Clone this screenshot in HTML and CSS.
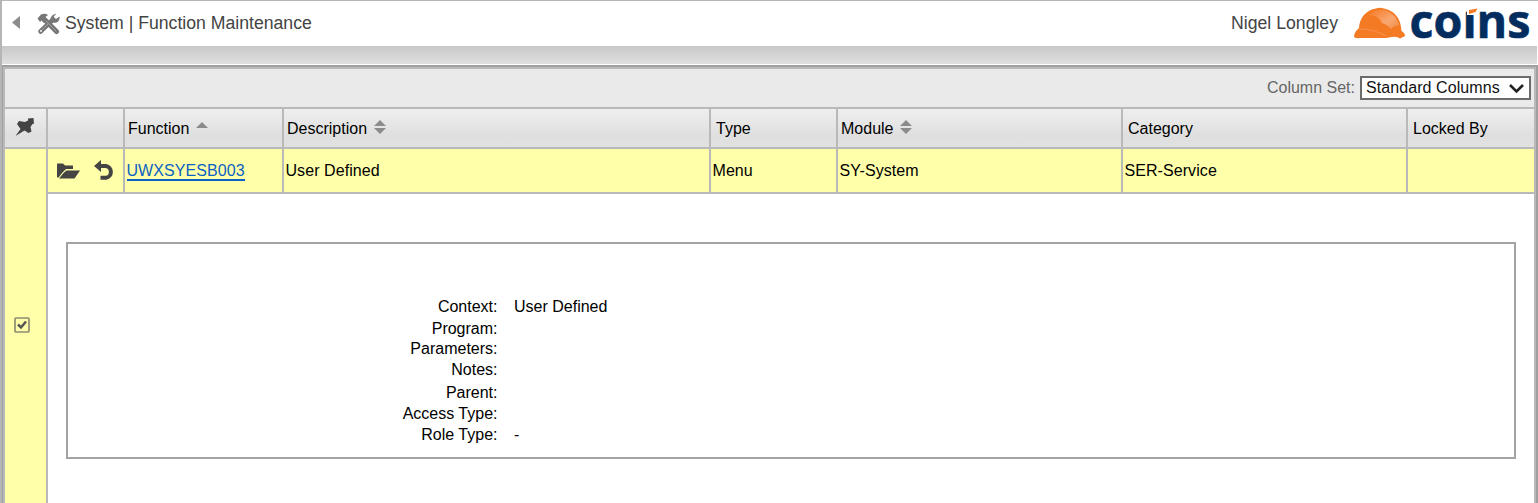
FILE: index.html
```html
<!DOCTYPE html>
<html lang="en">
<head>
<meta charset="utf-8">
<title>System | Function Maintenance</title>
<link rel="stylesheet" href="styles.css">
</head>
<body>
<div class="app">
  <header class="topbar">
    <svg class="back" width="8" height="13" viewBox="0 0 8 13"><path d="M8 0V13L0 6.500Z" fill="#8c8c8c"/></svg>
    <svg class="tools" width="23" height="22" viewBox="0 0 23 22">
      <g fill="none" stroke="#777" stroke-linecap="round">
        <path d="M8 7 19.500 18.500" stroke-width="5"/>
        <path d="M3.500 18.500 16 6.500" stroke-width="4.600"/>
      </g>
      <path d="M.5 5.500 4 1.500Q8 0 11 2L8.500 4 10.500 7 7 10 4.500 7.500 3 9Z" fill="#777"/>
      <path d="M19.500.5 16.500 4 19 6 22.500 3.500Q23.200 8 19.500 9.500 15 10.500 13.500 7.500 13 2 19.500.5Z" fill="#777"/>
      <path d="M9 8 19 18M4 18l8-8" stroke="#a0a0a0" stroke-width="1" fill="none"/>
      <circle cx="4" cy="18" r=".9" fill="#fff"/>
    </svg>
    <h1 class="title">System | Function Maintenance</h1>
    <span class="user">Nigel Longley</span>
    <svg class="logo" width="184" height="44" viewBox="1354 1 184 44" role="img" aria-label="coins">
      <defs>
        <linearGradient id="shine" x1="0" y1="0" x2="1" y2="1"><stop offset="0" stop-color="#f57a24"/><stop offset=".6" stop-color="#f9a873"/><stop offset="1" stop-color="#f58a42"/></linearGradient>
      </defs>
      <path d="M1354 36C1354 32 1356.500 29 1359 27C1359.500 17 1366 9 1376 7.500Q1379 6 1384 7.500C1394 9.500 1400 17 1401 26L1401.500 30Q1405 32 1405 35L1400 37.500Q1397 35 1392 36L1386 37H1360Q1355 37.500 1354 36Z" fill="#f57a24"/>
      <path d="M1369 14Q1375 8 1385 9Q1396 13 1399 24Q1393 25 1391 28Q1386 23 1382 22Q1378 14 1369 14Z" fill="url(#shine)"/>
      <path d="M1359.500 28Q1374 28 1386 35" stroke="#f89350" fill="none"/>
      <text class="logo-text" x="1409.500" y="36.500" textLength="121" lengthAdjust="spacingAndGlyphs">coıns</text>
      <path d="M1467 9H1479V14H1467Z" fill="#fff"/>
      <path d="M1469 9 1477.500 7.500 1475.500 11 1469 13Z" fill="#f57a24"/>
    </svg>
  </header>
  <div class="band"></div>
  <main class="panel">
    <div class="toolbar">
      <label for="column-set">Column Set:</label>
      <span class="select-wrap">
        <select id="column-set"><option>Standard Columns</option></select>
        <svg class="chevron" width="15" height="10" viewBox="0 0 15 10"><path d="M1 1 7.500 7.500 14 1" fill="none" stroke="#222" stroke-width="2.600"/></svg>
      </span>
    </div>
    <div class="row head">
      <div class="cell pin"><svg width="20" height="20" viewBox="0 0 20 20"><path d="M13 1.500 18.500 1 19 6.500 17.500 7 15.500 10 16.500 14.500 13.500 16 9.500 13.500 .5 19 5.500 12 2 7 4 4 10 5 13 3.500Z" fill="#444"/></svg></div>
      <div class="cell"></div>
      <div class="cell">Function <svg class="sort" width="12" height="14" viewBox="0 0 12 14"><path d="M0 8 6 2 12 8Z" fill="#8b8b8b"/></svg></div>
      <div class="cell">Description <svg class="sort" width="12" height="14" viewBox="0 0 12 14"><path d="M0 6 6 0 12 6ZM0 8H12L6 14Z" fill="#8b8b8b"/></svg></div>
      <div class="cell wide">Type</div>
      <div class="cell">Module <svg class="sort" width="12" height="14" viewBox="0 0 12 14"><path d="M0 6 6 0 12 6ZM0 8H12L6 14Z" fill="#8b8b8b"/></svg></div>
      <div class="cell wide">Category</div>
      <div class="cell wide">Locked By</div>
    </div>
    <div class="record">
      <div class="check"><svg width="16" height="16" viewBox="0 0 16 16"><rect x="1" y="1" width="14" height="14" rx="1" fill="none" stroke="#8d8d73" stroke-width="1.700"/><path d="M4 7.500 7 10.500 12 4.500" fill="none" stroke="#555" stroke-width="2.500"/></svg></div>
      <div class="record-main">
        <div class="row data">
          <div class="cell actions">
            <svg width="23" height="16" viewBox="0 0 23 16"><path d="M0 .5H6L8 2.500H16V6H9L5 10 1.500 14.500H0Z" fill="#444"/><path d="M9.500 7.500H23L17.500 15.500H2L6.500 10Z" fill="#444"/></svg>
            <svg width="21" height="21" viewBox="0 0 21 21"><path d="M4 6H12A6 6 0 0 1 12 17.800H6.500" fill="none" stroke="#444" stroke-width="4"/><path d="M0 6 7 0V12Z" fill="#444"/></svg>
          </div>
          <div class="cell"><a class="link" href="#">UWXSYESB003</a></div>
          <div class="cell">User Defined</div>
          <div class="cell">Menu</div>
          <div class="cell">SY-System</div>
          <div class="cell">SER-Service</div>
          <div class="cell"></div>
        </div>
        <dl class="details">
          <dt>Context:</dt><dd>User Defined</dd>
          <dt>Program:</dt><dd></dd>
          <dt>Parameters:</dt><dd></dd>
          <dt>Notes:</dt><dd></dd>
          <dt>Parent:</dt><dd></dd>
          <dt>Access Type:</dt><dd></dd>
          <dt>Role Type:</dt><dd>-</dd>
        </dl>
      </div>
    </div>
  </main>
</div>
</body>
</html>
```
FILE: styles.css
```css
* { box-sizing: border-box; }
body {
  margin: 0;
  font: 16px/20px "Liberation Sans", Arial, sans-serif;
  color: #000;
  background: #fff;
}
.app {
  height: 503px;
  display: flex;
  flex-direction: column;
  border-left: 2px solid #b5b5b5;
  border-top: 1px solid #b5b5b5;
  overflow: hidden;
}
.topbar {
  height: 45px;
  flex: none;
  display: flex;
  align-items: center;
  padding-left: 10px;
  color: #444;
  font-size: 17.65px;
}
.back { margin-bottom: 2px; }
.tools { margin-left: 17px; }
.title {
  margin: 0 0 1px 5px;
  font-size: 17.65px;
  font-weight: normal;
}
.user { margin: 0 16px 1px auto; }
.logo { flex: none; }
.logo-text {
  font: bold 47px "Open Sans", "Noto Sans", sans-serif;
  fill: #022d5e;
  stroke: #022d5e;
  stroke-width: 0.6px;
}
.band {
  height: 19px;
  flex: none;
  margin-right: 1px;
  background: linear-gradient(#c8c8c8, #dfdfdf);
  border-bottom: 1px solid #fff;
}
.panel {
  flex: 1;
  display: flex;
  flex-direction: column;
  border-top: 2px solid #a0a0a0;
  border-left: 1px solid #a0a0a0;
  border-right: 2px solid #a0a0a0;
  box-shadow: inset 0 2px #b9b9b9, inset 2px 0 #b9b9b9, inset -2px 0 #b9b9b9;
  padding: 2px 2px 0;
}
.toolbar {
  height: 40px;
  flex: none;
  display: flex;
  align-items: center;
  justify-content: flex-end;
  gap: 5px;
  padding-right: 3px;
  color: #666;
  background: #eaeaea;
  border-bottom: 2px solid #b9b9b9;
}
.select-wrap { position: relative; display: flex; }
.select-wrap select {
  width: 171px;
  height: 24px;
  padding: 0 0 0 4px;
  border: 2px solid #6b6b6b;
  border-radius: 0;
  appearance: none;
  background: #fff;
  color: #111;
  font: inherit;
  letter-spacing: 0.08px;
}
.chevron { position: absolute; right: 7px; top: 8px; pointer-events: none; }
.row {
  display: grid;
  border-bottom: 2px solid #b9b9b9;
}
.head {
  height: 40px;
  flex: none;
  grid-template-columns: 43px 77px 159px 427px 127px 285px 285px 126px;
  background: linear-gradient(#efefef, #dfdfdf 70%, #e1e1e1);
}
.cell {
  display: flex;
  align-items: center;
  border-right: 2px solid #b9b9b9;
  padding-left: 3px;
}
.head .cell { padding-top: 2px; }
.cell:last-child { border-right: 0; }
.head .wide { padding-left: 5px; }
.head .pin { padding: 0 0 3px 10px; }
.sort { margin: 0 0 4px 7px; }
.record {
  flex: 1;
  display: grid;
  grid-template-columns: 43px 1fr;
}
.check {
  border-right: 2px solid #b9b9b9;
  background: #ffffa9;
  padding: 168px 0 0 9px;
}
.data {
  height: 45px;
  grid-template-columns: 77px 159px 427px 127px 285px 285px 126px;
  background: #ffffa9;
}
.data .cell { padding-left: 1.5px; letter-spacing: 0.07px; }
.data .actions { padding-left: 9px; gap: 14px; }
.link {
  color: #0b62c4;
  text-decoration: none;
  border-bottom: 2px solid #0b62c4;
  line-height: 17px;
  margin-top: 2px;
}
.details {
  height: 217px;
  margin: 48px 18px 0;
  padding: 53px 0 0;
  border: 2px solid #a3a3a3;
  display: grid;
  grid-template-columns: 429.500px 1fr;
  grid-template-rows: 22px 20px 21px 23px 21px 21px 21px;
  column-gap: 16.500px;
}
.details dt { text-align: right; }
.details dd { margin: 0; }
```
